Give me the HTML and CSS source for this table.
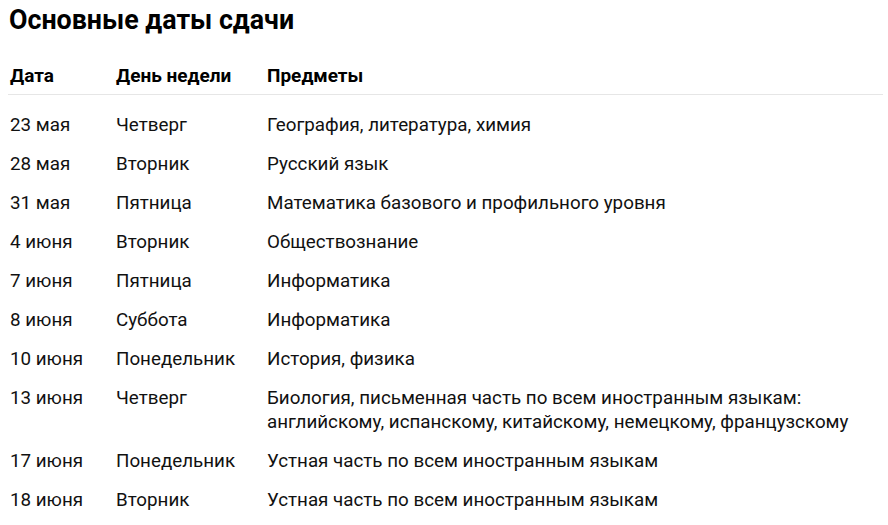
FILE: index.html
```html
<!DOCTYPE html>
<html lang="ru">
<head>
<meta charset="utf-8">
<link rel="stylesheet" href="styles.css">
</head>
<body>
<div class="page">
  <h2 class="title">Основные даты сдачи</h2>
  <table class="dates">
    <thead>
      <tr><th class="c-date">Дата</th><th class="c-day">День недели</th><th>Предметы</th></tr>
    </thead>
    <tbody>
      <tr><td>23 мая</td><td>Четверг</td><td>География, литература, химия</td></tr>
      <tr><td>28 мая</td><td>Вторник</td><td>Русский язык</td></tr>
      <tr><td>31 мая</td><td>Пятница</td><td>Математика базового и профильного уровня</td></tr>
      <tr><td>4 июня</td><td>Вторник</td><td>Обществознание</td></tr>
      <tr><td>7 июня</td><td>Пятница</td><td>Информатика</td></tr>
      <tr><td>8 июня</td><td>Суббота</td><td>Информатика</td></tr>
      <tr><td>10 июня</td><td>Понедельник</td><td>История, физика</td></tr>
      <tr><td>13 июня</td><td>Четверг</td><td>Биология, письменная часть по всем иностранным языкам: английскому, испанскому, китайскому, немецкому, французскому</td></tr>
      <tr><td>17 июня</td><td>Понедельник</td><td>Устная часть по всем иностранным языкам</td></tr>
      <tr><td>18 июня</td><td>Вторник</td><td>Устная часть по всем иностранным языкам</td></tr>
    </tbody>
  </table>
</div>
</body>
</html>
```
FILE: styles.css
```css
html, body { margin: 0; padding: 0; background: #fff; }
body {
  font-family: Roboto, "Liberation Sans", sans-serif;
  color: #111;
}
.page { padding: 4px 5px 0 8px; width: 875px; }
.title {
  margin: 0 0 0 1px;
  font-size: 26.8px;
  line-height: 32px;
  font-weight: 700;
  color: #000;
}
.dates {
  width: 875px;
  border-collapse: collapse;
  margin-top: 28px;
  font-size: 18.8px;
  line-height: 24px;
}
.dates th {
  text-align: left;
  font-weight: 700;
  font-size: 19px;
  padding: 0 2px 6px 2px;
  border-bottom: 1px solid #e6e6e6;
  color: #000;
}
.dates td {
  text-align: left;
  vertical-align: top;
  padding: 7px 2px 8px 2px;
}
.dates tbody tr:first-child td { padding-top: 18px; }
.c-date { width: 102px; }
.c-day { width: 147px; }
```
